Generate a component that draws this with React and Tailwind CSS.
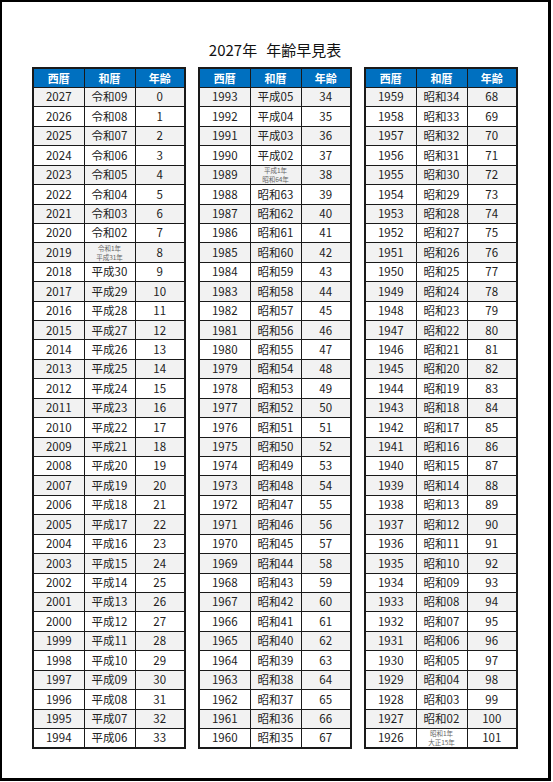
const FONT = "font-['Noto_Sans_CJK_JP','Noto_Sans',sans-serif]";

const toEra = (year) => {
	if (year === 2019) return ["令和1年", "平成31年"];
	if (year === 1989) return ["平成1年", "昭和64年"];
	if (year === 1926) return ["昭和1年", "大正15年"];
	if (year >= 2020) return "令和" + String(year - 2018).padStart(2, "0");
	if (year >= 1990) return "平成" + String(year - 1988).padStart(2, "0");
	return "昭和" + String(year - 1925).padStart(2, "0");
};

const buildRows = (start) =>
	Array.from({ length: 34 }, (_, i) => {
		const year = start - i;
		return { year, era: toEra(year), age: 2027 - year };
	});

const TABLES = [buildRows(2027), buildRows(1993), buildRows(1959)];

const AgeTable = ({ rows }) => (
	<table className="table-fixed w-[152px] border-collapse border-2 border-[#1a1a1a]">
		<colgroup>
			<col className="w-[51px]" />
			<col className="w-[51px]" />
			<col className="w-[50px]" />
		</colgroup>
		<thead>
			<tr className="h-[19.5px] bg-[#0070c0] text-white text-[11px] font-bold">
				<th className="border border-[#1a1a1a] p-0 leading-none">西暦</th>
				<th className="border border-[#1a1a1a] p-0 leading-none">和暦</th>
				<th className="border border-[#1a1a1a] p-0 leading-none">年齢</th>
			</tr>
		</thead>
		<tbody>
			{rows.map((row, i) => (
				<tr
					key={row.year}
					className={`h-[19.43px] text-[11.5px] text-[#222] ${i % 2 === 0 ? "bg-[#f2f2f2]" : "bg-white"}`}
				>
					<td className="border border-[#1a1a1a] p-0 text-center leading-none">{row.year}</td>
					<td className="border border-[#1a1a1a] p-0 text-center leading-none">
						{Array.isArray(row.era) ? (
							<div className="flex flex-col items-center text-[6.5px] leading-[8.5px] text-[#666]">
								<span>{row.era[0]}</span>
								<span>{row.era[1]}</span>
							</div>
						) : (
							row.era
						)}
					</td>
					<td className="border border-[#1a1a1a] p-0 text-center leading-none">{row.age}</td>
				</tr>
			))}
		</tbody>
	</table>
);

export default function App() {
	return (
		<div className={`w-[553px] h-[782px] bg-white ${FONT}`}>
			<div className="w-[551px] h-[781px] border-l-2 border-t-2 border-r-[3px] border-b-[3px] border-black flex flex-col items-center pt-[38px]">
				<h1 className="h-[20px] text-[15px] leading-[20px] text-[#111] flex">
					<span>2027年</span>
					<span className="ml-[9px]">年齢早見表</span>
				</h1>
				<div className="mt-[7px] flex gap-3">
					{TABLES.map((rows) => (
						<AgeTable key={rows[0].year} rows={rows} />
					))}
				</div>
			</div>
		</div>
	);
}
